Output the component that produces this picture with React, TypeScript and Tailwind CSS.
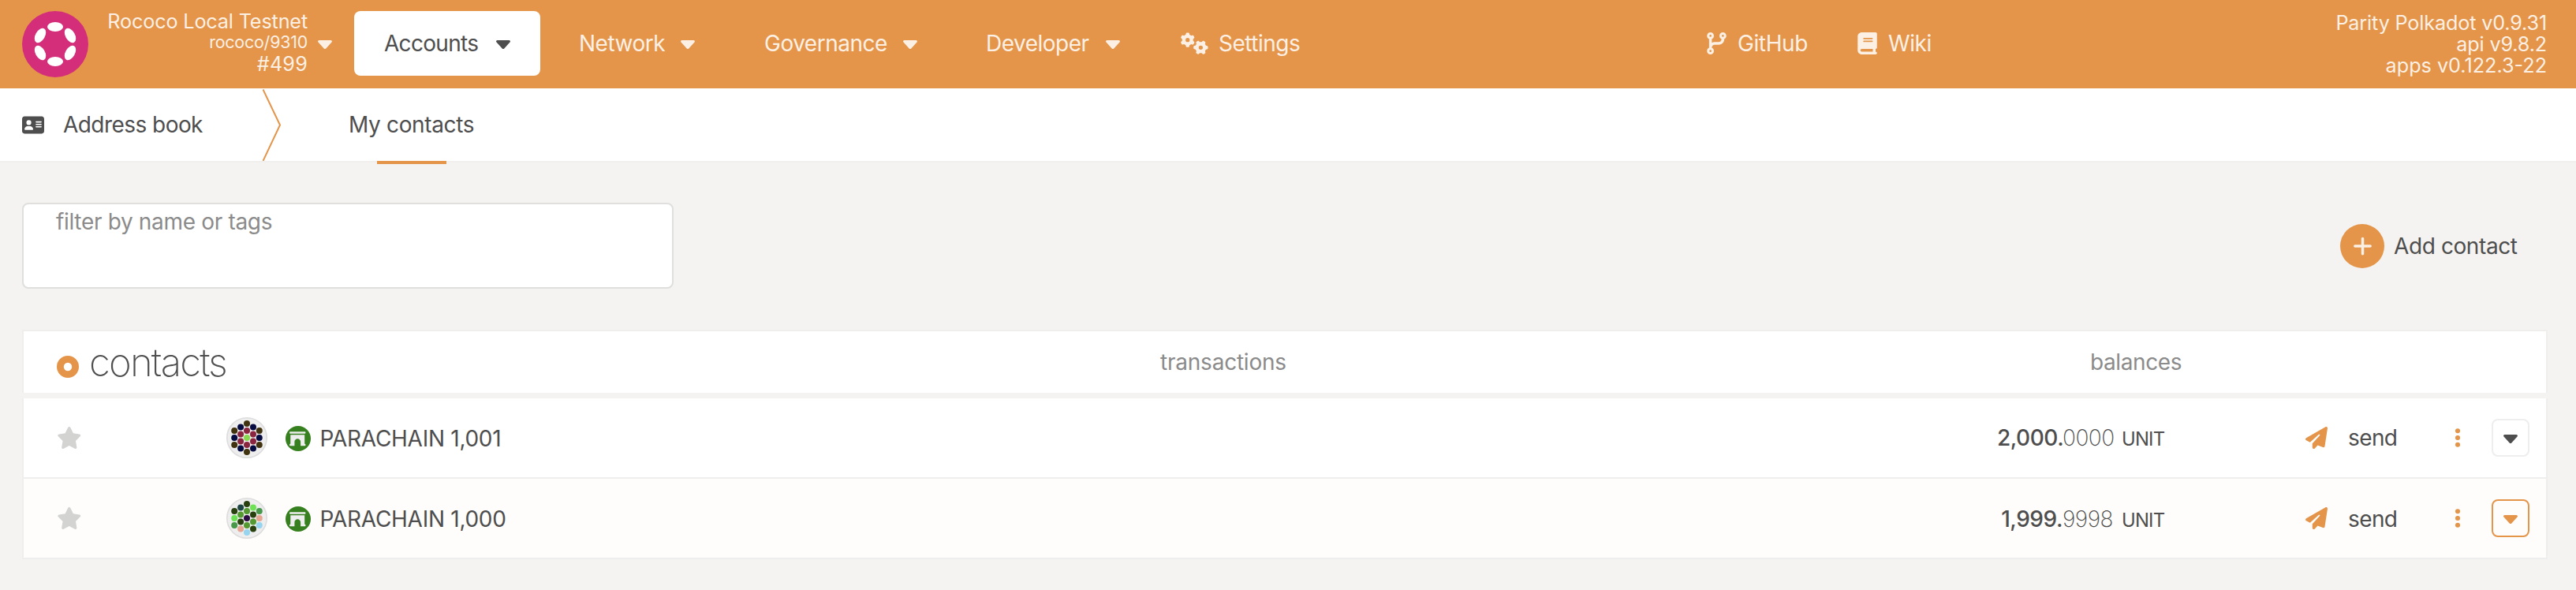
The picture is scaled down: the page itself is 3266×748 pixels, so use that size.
import React from "react";
import {
  FaAddressCard,
  FaArchway,
  FaBook,
  FaCodeBranch,
  FaEllipsisVertical,
  FaGears,
  FaPaperPlane,
  FaPlus,
  FaStar,
} from "react-icons/fa6";

function Caret({ className = "" }: { className?: string }) {
  return (
    <svg viewBox="0 0 18 11" className={`h-[11px] w-[18px] shrink-0 ${className}`} fill="currentColor">
      <path d="M1.6 0h14.8c1.4 0 2.1 1.6 1.1 2.6l-7.2 7.8c-.7.8-1.9.8-2.6 0L.5 2.6C-.5 1.6.2 0 1.6 0z" />
    </svg>
  );
}

function Logo() {
  return (
    <svg viewBox="0 0 84 84" className="h-[84px] w-[84px] shrink-0">
      <circle cx="42" cy="42" r="42" fill="#d42e7b" />
      <g fill="#fff">
        <ellipse cx="42" cy="20" rx="10" ry="6" />
        <ellipse cx="42" cy="64" rx="10" ry="6" />
        <ellipse cx="23" cy="31" rx="10" ry="6" transform="rotate(-60 23 31)" />
        <ellipse cx="61" cy="53" rx="10" ry="6" transform="rotate(-60 61 53)" />
        <ellipse cx="61" cy="31" rx="10" ry="6" transform="rotate(60 61 31)" />
        <ellipse cx="23" cy="53" rx="10" ry="6" transform="rotate(60 23 53)" />
      </g>
    </svg>
  );
}

const DOTS: [number, number][] = [
  [26, 8], [18.1, 12.5], [34, 12.5],
  [10.2, 17], [26, 17], [41.8, 17],
  [18.1, 21.5], [34, 21.5],
  [10.2, 26], [26, 26], [41.8, 26],
  [18.1, 30.5], [34, 30.5],
  [10.2, 35], [26, 35], [41.8, 35],
  [18.1, 39.5], [34, 39.5], [26, 44],
];

function Identicon({ colors }: { colors: string[] }) {
  return (
    <svg viewBox="0 0 52 52" className="h-[52px] w-[52px] shrink-0">
      <circle cx="26" cy="26" r="25.2" fill="#eeeeee" stroke="#dddddd" strokeWidth="1.6" />
      {DOTS.map(([x, y], i) => (
        <circle key={i} cx={x} cy={y} r="4" fill={colors[i]} />
      ))}
    </svg>
  );
}

const BR = "#41330f";
const NV = "#060c42";
const RD = "#8c2640";
const FG = "#29400f";
const G2 = "#559a30";
const LG = "#6ce254";
const TG = "#47984a";
const PK = "#e5a793";
const BL = "#97d4f0";

const ROWS = [
  {
    name: "PARACHAIN 1,001",
    whole: "2,000.",
    frac: "0000",
    amountClass: "mt-[1px]",
    sendClass: "mt-0",
    colors: [BR, NV, NV, BR, RD, BR, RD, RD, NV, "#88d94f", NV, RD, RD, BR, RD, BR, NV, NV, BR],
    hot: false,
  },
  {
    name: "PARACHAIN 1,000",
    whole: "1,999.",
    frac: "9998",
    amountClass: "mt-[4px]",
    sendClass: "mt-[2px]",
    colors: [FG, "#1d4644", LG, FG, G2, TG, G2, FG, LG, "#2c0d42", PK, FG, G2, TG, G2, BL, PK, FG, BL],
    hot: true,
  },
];

function Row({ row }: { row: (typeof ROWS)[number] }) {
  return (
    <div
      className={`flex h-[102px] items-center border-b-2 border-[#eeeeee] pl-[42px] pr-[21px] ${
        row.hot ? "bg-[#fefdfb]" : "bg-white"
      }`}
    >
      <FaStar className="h-[28px] w-[31.5px] shrink-0 text-[#d3d3d2]" />
      <div className="ml-[183px] flex h-[52px] items-center">
        <Identicon colors={row.colors} />
      </div>
      <div className="ml-[23px] mt-[2px] flex h-8 w-8 shrink-0 items-center justify-center rounded-full bg-[#37801f]">
        <FaArchway className="h-[20.5px] w-[20.5px] text-[#eeeeee]" />
      </div>
      <div className="ml-[12px] mt-[1px] w-[600px] tracking-[-0.28px]">{row.name}</div>
      <div className={`ml-auto flex items-baseline ${row.amountClass}`}>
        <span className="w-[83px] text-right font-medium tracking-[-0.45px]">{row.whole}</span>
        <span className="w-[70px] font-extralight tracking-[-0.5px]">{row.frac}</span>
        <span className="ml-[5px] w-[56px] text-[23.8px] tracking-[-0.8px]">UNIT</span>
      </div>
      <FaPaperPlane className="ml-[177px] h-[28px] w-[28px] shrink-0 text-[#e4954a]" />
      <div className={`ml-[26px] w-[63px] tracking-[-0.6px] ${row.sendClass}`}>send</div>
      <FaEllipsisVertical className="ml-[62px] h-[28px] w-[28px] shrink-0 text-[#e4954a]" />
      <div
        className={`ml-[29px] flex h-[48px] w-[48px] items-center justify-center rounded-[8px] border-2 ${
          row.hot ? "border-[#e4954a] text-[#e4954a]" : "border-[#eeeeee] text-[#4e4e4e]"
        }`}
      >
        <Caret className="mt-[3px]" />
      </div>
    </div>
  );
}

export default function App() {
  return (
    <div className="h-[748px] w-[3266px] overflow-hidden bg-[#f4f3f1] font-['Inter',sans-serif] text-[28px] leading-[40px] text-[#4e4e4e] whitespace-nowrap">
      <header className="flex h-[112px] items-center bg-[#e4954a] pl-[28px] pr-[37px] text-[#fcf0e4]">
        <div className="flex w-[421px] shrink-0 items-center">
          <Logo />
          <div className="-mt-[2px] ml-auto mr-[13px] flex flex-col items-end text-[25.2px]">
            <div className="leading-[27px] tracking-[-0.15px]">Rococo Local Testnet</div>
            <div className="text-[21.4px] leading-[25px] tracking-[-0.2px]">rococo/9310</div>
            <div className="leading-[30px] tracking-[0.2px]">#499</div>
          </div>
          <Caret className="mr-[28px] mt-[1px]" />
        </div>
        <div className="-mt-[2px] flex h-[82px] w-[236px] items-center rounded-[8px] bg-white pl-[38px] text-[#4e4e4e]">
          <span className="w-[142px] tracking-[-0.7px]">Accounts</span>
          <Caret className="mt-[2px]" />
        </div>
        <nav className="-mt-[2px] flex items-center">
          <div className="ml-[49px] flex w-[235px] items-center">
            <span className="w-[129px] tracking-[-0.5px]">Network</span>
            <Caret className="mt-[2px]" />
          </div>
          <div className="flex w-[281px] items-center">
            <span className="w-[176px] tracking-[-0.5px]">Governance</span>
            <Caret className="mt-[2px]" />
          </div>
          <div className="flex w-[247px] items-center">
            <span className="w-[152px] tracking-[-0.5px]">Developer</span>
            <Caret className="mt-[2px]" />
          </div>
          <div className="flex w-[667px] items-center">
            <FaGears className="h-[28px] w-[35px]" />
            <span className="ml-[13px] tracking-[-0.5px]">Settings</span>
          </div>
          <div className="flex w-[191px] items-center">
            <FaCodeBranch className="h-[28px] w-[25px]" />
            <span className="ml-[14px] tracking-[-0.4px]">GitHub</span>
          </div>
          <div className="flex items-center">
            <FaBook className="h-[28px] w-[25px]" />
            <span className="ml-[14px] tracking-[-0.4px]">Wiki</span>
          </div>
        </nav>
        <div className="ml-auto text-right text-[25.2px] leading-[27px] tracking-[-0.15px]">
          <div>Parity Polkadot v0.9.31</div>
          <div>api v9.8.2</div>
          <div className="tracking-[0px]">apps v0.122.3-22</div>
        </div>
      </header>

      <div className="flex h-[94px] items-center border-b-2 border-[#f0efee] bg-white pl-[28px]">
        <FaAddressCard className="h-[25px] w-[28px]" />
        <span className="ml-[24px] w-[253px] tracking-[-0.55px]">Address book</span>
        <svg viewBox="0 0 24 92" className="h-[92px] w-[24px]" fill="none" stroke="#e4954a" strokeWidth="2">
          <path d="M0.5 1.5 L22 46.5 L0.5 92" />
        </svg>
        <div className="relative ml-[85px] flex h-[92px] items-center">
          <span className="tracking-[-0.35px]">My contacts</span>
          <div className="absolute -bottom-[4px] left-[36px] h-[4px] w-[88px] bg-[#e4954a]" />
        </div>
      </div>

      <main className="px-[28px]">
        <div className="mt-[51px] flex h-[109px] items-center justify-between pr-[46px]">
          <div className="h-[109px] w-[826px] rounded-[8px] border-2 border-[#dfdfde] bg-white pl-[41px] pt-[2px] tracking-[-0.33px] text-[#8b8b8b]">
            filter by name or tags
          </div>
          <div className="flex items-center">
            <div className="flex h-[56px] w-[56px] items-center justify-center rounded-full bg-[#e4954a] text-[#fcf0e4]">
              <FaPlus className="h-[28px] w-[25px]" />
            </div>
            <span className="ml-[12px] w-[157px] tracking-[-0.4px]">Add contact</span>
          </div>
        </div>

        <section className="mt-[52px] w-[3202px]">
          <div className="flex h-[80px] items-center border-x-2 border-t-2 border-[#efeeec] bg-white pl-[42px]">
            <svg viewBox="0 0 28 28" className="mt-[12px] h-[28px] w-[28px]">
              <circle cx="14" cy="14" r="9.6" fill="none" stroke="#e4954a" strokeWidth="8.8" />
            </svg>
            <span className="ml-[13px] mt-[2px] w-[1358px] text-[49px] font-extralight leading-[60px] tracking-[-1.8px]">
              contacts
            </span>
            <span className="w-[1179px] tracking-[-0.22px] text-[#8b8b8b]">transactions</span>
            <span className="tracking-[-0.4px] text-[#8b8b8b]">balances</span>
          </div>
          <div className="mt-[7px] border-x-2 border-[#efeeec]">
            {ROWS.map((row) => (
              <Row key={row.name} row={row} />
            ))}
          </div>
        </section>
      </main>
    </div>
  );
}
